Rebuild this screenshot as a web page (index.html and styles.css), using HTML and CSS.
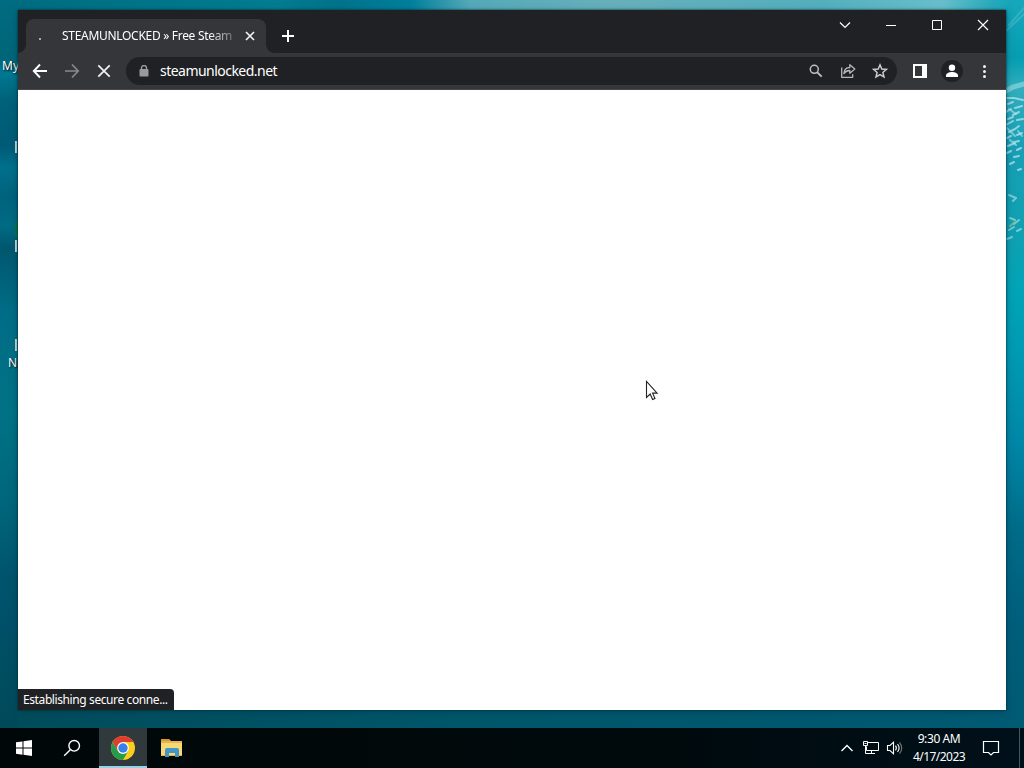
FILE: index.html
```html
<!DOCTYPE html>
<html lang="en">
<head>
<meta charset="utf-8">
<title>Desktop</title>
<link rel="stylesheet" href="styles.css">
</head>
<body>
<main class="desktop">
  <div class="sky"></div>
  <div class="edge-left"></div>
  <div class="edge-right"></div>
  <svg class="foam" width="18" height="260" viewBox="0 0 18 260" fill="none" stroke="#b4e5ec" stroke-linecap="round">
    <path d="M0 31 18 14M3 25 18 8" stroke="#4fc0cf" stroke-width="2" opacity=".5"/>
    <path d="M0 91 7 87 18 84" stroke-width="5" opacity=".5"/>
    <path d="M0 98h8l9 2M2 104l5-2M9 108l7-2M0 112l5-3M7 115l6-3M2 119l5-2M11 120l6-1M0 125l7-4M9 129l4-3M3 132l6-3M11 135l5-2M1 138l4-2M8 142l5-1M2 146l7-3M11 150l4-2M1 153l4-2M8 157l5-1M4 164l4-2M12 170l3-1" stroke-width="2" opacity=".75"/>
    <path d="M3 109l7 5M1 128l8 8M12 131l4 5M4 140l6 5M3 195l7 3M7 201l3-3M4 218l5 2M8 224l5-4M3 230l5-3M11 231l4-2M1 239l5-2" stroke-width="2" opacity=".6"/>
    <path d="M4 226l5-4" stroke="#aac56d" stroke-width="2" opacity=".6"/>
  </svg>
  <span class="label label-my">My</span>
  <span class="label label-n">N</span>
  <i class="shortcut s1"></i><i class="shortcut s2"></i><i class="shortcut s3"></i><i class="green"></i>

  <section class="window">
    <header class="tabstrip">
      <div class="tab">
        <span class="dot"></span>
        <span class="tab-title">STEAMUNLOCKED » Free Steam</span>
        <svg class="tab-close" width="10" height="10" viewBox="0 0 10 10"><path d="M1 1 9 9M9 1 1 9" stroke="#f1f1f2" stroke-width="1.7"/></svg>
      </div>
      <svg class="plus" width="12" height="12" viewBox="0 0 12 12"><path d="M6 0v12M0 6h12" stroke="#fff" stroke-width="2"/></svg>
      <div class="controls">
        <svg width="46" height="30" viewBox="0 0 46 30"><path d="m18 12.500 5 5 5-5" fill="none" stroke="#fff" stroke-width="1.200"/></svg>
        <svg width="46" height="30" viewBox="0 0 46 30"><path d="M18 15.500h10" stroke="#fff"/></svg>
        <svg width="46" height="30" viewBox="0 0 46 30"><path d="M18.500 10.500h9v9h-9z" fill="none" stroke="#fff"/></svg>
        <svg width="46" height="30" viewBox="0 0 46 30"><path d="m18 10 10 10m0-10-10 10" stroke="#fff" stroke-width="1.200"/></svg>
      </div>
    </header>
    <nav class="toolbar">
      <svg width="32" height="32" viewBox="0 0 32 32"><path d="M23 16H10M16 9.500 9.800 16l6.200 6.500" fill="none" stroke="#fff" stroke-width="1.900"/></svg>
      <svg width="32" height="32" viewBox="0 0 32 32"><path d="M9 16h13M16 9.500l6.200 6.500-6.200 6.500" fill="none" stroke="#88898c" stroke-width="1.700"/></svg>
      <svg width="32" height="32" viewBox="0 0 32 32"><path d="m10.300 10.300 11.400 11.400m0-11.400L10.300 21.700" stroke="#eee" stroke-width="1.800"/></svg>
      <div class="omnibox">
        <svg class="lock" width="10" height="12" viewBox="0 0 10 12"><path d="M2.500 5V3a2.500 2.500 0 0 1 5 0v2" fill="none" stroke="#989a9d" stroke-width="1.400"/><rect x=".5" y="4" width="9" height="7.500" rx="1" fill="#989a9d"/></svg>
        <span class="url">steamunlocked.net</span>
        <div class="actions">
          <svg width="32" height="28" viewBox="0 0 32 28" fill="none" stroke="#bfc0c2"><circle cx="14.300" cy="12.300" r="4" stroke-width="1.500"/><path d="m17.300 15.300 4.400 4.400" stroke-width="1.900"/></svg>
          <svg width="32" height="28" viewBox="0 0 32 28" fill="none" stroke="#b6b7ba" stroke-width="1.300"><path d="M9.700 10.500v9.800h11v-3M11.800 16.500c.4-4 2.700-6 6-6V7.700l5 4.300-5 4.300v-2.800c-2.800 0-4.300.8-6 3z" stroke-linejoin="round"/></svg>
          <svg width="32" height="28" viewBox="0 0 32 28"><path d="m16 7.800 1.800 4.200 4.600.4-3.500 3 1.100 4.600-4-2.400-4 2.400 1.100-4.600-3.500-3 4.600-.4z" fill="none" stroke="#c9cacc" stroke-width="1.500"/></svg>
        </div>
      </div>
      <div class="tools">
        <svg width="32" height="32" viewBox="0 0 32 32"><path fill="#fff" fill-rule="evenodd" d="M9 9h14v14H9zM11 11v10h7V11z"/></svg>
        <svg width="32" height="32" viewBox="0 0 32 32"><circle cx="16" cy="16" r="11" fill="#202124"/><circle cx="16" cy="12.700" r="3.200" fill="#fff"/><path d="M10 22v-1.400c0-2.500 3-3.700 6-3.700s6 1.200 6 3.700V22z" fill="#fff"/></svg>
        <svg width="32" height="32" viewBox="0 0 32 32" fill="#f1f1f2"><circle cx="16.500" cy="11.500" r="1.500"/><circle cx="16.500" cy="16.500" r="1.500"/><circle cx="16.500" cy="21.500" r="1.500"/></svg>
      </div>
    </nav>
    <div class="page"></div>
    <div class="status"><span>Establishing secure conne...</span></div>
  </section>
</main>
<footer class="taskbar">
  <div class="apps">
    <div class="app"><svg width="48" height="40" viewBox="0 0 48 40"><path d="m16 14.300 6.500-.9v6.100H16zM23.500 13.200l8.500-1.200v7.500h-8.500zM16 20.500h6.500v6.200l-6.500-.9zM23.500 20.500H32V28l-8.500-1.200z" fill="#fff"/></svg></div>
    <div class="app"><svg width="48" height="40" viewBox="0 0 48 40" fill="none" stroke="#fff" stroke-width="1.400"><circle cx="26.200" cy="17.800" r="5.300"/><path d="m22.300 21.700-6.100 6.100"/></svg></div>
    <div class="app active"><svg width="48" height="40" viewBox="0 0 48 40"><circle cx="24" cy="20" r="12" fill="#fbcd1d"/><path d="M13.600 14a12 12 0 0 1 20.800 0H24l-5.200 9z" fill="#df3d32"/><path d="M13.600 14A12 12 0 0 0 24 32l5.200-9H18.800z" fill="#269b4c"/><circle cx="24" cy="20" r="5.900" fill="#fff"/><circle cx="24" cy="20" r="4.700" fill="#397fe5"/></svg></div>
    <div class="app"><svg width="48" height="40" viewBox="0 0 48 40"><path d="M14 11h8l2 2h11v15H14z" fill="#e8b64b"/><path d="M14 15h21v12H14z" fill="#f8d775"/><path d="M14 11h8l1 2h-9z" fill="#d49a32"/><path d="M18 29v-7q0-2 2-2h10q2 0 2 2v7h-4v-4h-6v4z" fill="#4296c8"/></svg></div>
  </div>
  <div class="tray">
    <svg class="chevron" width="14" height="10" viewBox="0 0 14 10"><path d="m1.500 8 5.500-5.500L12.500 8" fill="none" stroke="#fff" stroke-width="1.400"/></svg>
    <svg class="network" width="18" height="16" viewBox="0 0 18 16" fill="none" stroke="#fff"><path d="M6 2.500h10.500v8H4.500v-4M9.500 10.500v3M5 13.500h8M1.500 1.500h4v4h-4zM3.500 5.500v8h2M2.500 3.500h2"/></svg>
    <svg class="sound" width="18" height="16" viewBox="0 0 18 16" fill="none" stroke="#fff" stroke-width="1.100"><path d="M1.500 5.500H4l3.500-3.300v11.600L4 10.500H1.500zM9.500 5.700q1.700 2.300 0 4.600M11.500 4q3.200 4 0 8"/><path d="M13.500 2.300q4.500 5.700 0 11.400" stroke="#777"/></svg>
    <div class="clock"><span class="time">9:30 AM</span><span class="date">4/17/2023</span></div>
    <svg class="notice" width="18" height="18" viewBox="0 0 18 18"><path d="M1.500 2.500h15v11h-5L9 16l-2.500-2.500h-5z" fill="none" stroke="#fff" stroke-width="1.200"/></svg>
    <i class="show-desktop"></i>
  </div>
</footer>
<svg class="pointer" width="14" height="22" viewBox="0 0 14 22"><path d="M1.500 1.500v16l3.700-3.500 2.400 5.500 2.400-1-2.400-5.400h4.500z" fill="#fff" stroke="#222" stroke-width="1.100"/></svg>
</body>
</html>
```

FILE: styles.css
```css
* { box-sizing: border-box; }
body { margin: 0; width: 1024px; height: 768px; overflow: hidden; display: flex; flex-direction: column; font-family: "Noto Sans", "Open Sans", sans-serif; font-size: 12px; color: #fff; }
svg { display: block; flex: none; }
.desktop { position: relative; height: 728px; background: linear-gradient(90deg, #004c5b, #00566a 45%, #005a73); }
.sky { position: absolute; inset: 0 0 auto; height: 14px; background: linear-gradient(90deg, #006b80, #00778b 18%, #047c91 27%, #00738a 33%, #007f9b 40%, #55aab8 46%, #67b0bb 60%, #54afbd 80%, #68bfcb 92%, #27a9bb 97%, #08a6b9); }
.edge-left { position: absolute; left: 0; top: 0; width: 18px; height: 728px; background: linear-gradient(#006c81, #006579 8%, #007891 10%, #006179 14%, #005a76 20%, #00708c 23%, #00627d 27%, #006b84 31%, #00576f 34%, #006d86 43%, #007285 57%, #00657a 70%, #00546d 79%, #00506a 85%, #004d5f 94%, #00495a); }
.edge-right { position: absolute; right: 0; top: 0; width: 18px; height: 728px; background: linear-gradient(#18a7ba, #059db2 8%, #31aebe 12%, #189fb5 20%, #10a0b2 32%, #00a4b6 40%, #0099b4 49%, #0086a7 61%, #006b88 73%, #005e7b 86%, #005a72); }
.foam { position: absolute; right: 0; top: 0; filter: blur(.7px); }
.label { position: absolute; text-shadow: 1px 1px 2px #000; line-height: 16px; }
.label-my { left: 2px; top: 58px; }
.label-n { left: 8px; top: 355px; }
.shortcut { position: absolute; left: 15px; width: 2px; height: 12px; background: #d1dfdf; }
.s1 { top: 141px; }
.s2 { top: 240px; }
.s3 { top: 339px; }
.green { position: absolute; left: 15px; top: 221px; width: 3px; height: 17px; background: #087747; border-radius: 3px 0 0 3px; }
.window { position: absolute; left: 18px; top: 10px; width: 988px; height: 700px; display: flex; flex-direction: column; background: #fff; box-shadow: 0 0 2px #00232d, 0 2px 7px #003d4c80; }
.tabstrip { height: 43px; display: flex; align-items: flex-start; background: #202124; padding-left: 8px; }
.tab { position: relative; width: 240px; height: 34px; margin-top: 9px; display: flex; align-items: center; background: #35363a; border-radius: 8px 8px 0 0; padding-left: 13px; }
.tab::before, .tab::after { content: ""; position: absolute; bottom: 0; width: 8px; height: 8px; }
.tab::before { left: -8px; background: radial-gradient(circle at 0 0, transparent 7.5px, #35363a 8px); }
.tab::after { right: -8px; background: radial-gradient(circle at 100% 0, transparent 7.5px, #35363a 8px); }
.dot { width: 2px; height: 2px; background: #a9aaac; margin: 5px 21px 0 0; }
.tab-title { width: 174px; margin-bottom: 2px; white-space: nowrap; letter-spacing: -.3px; -webkit-mask-image: linear-gradient(90deg, #000 146px, transparent 180px); mask-image: linear-gradient(90deg, #000 146px, transparent 180px); }
.tab-close { margin-left: 9px; }
.plus { margin: 20px 0 0 16px; }
.controls { display: flex; margin-left: auto; }
.toolbar { height: 37px; padding: 0 6px; display: flex; align-items: center; background: #35363a; border-bottom: 1px solid #46474a; }
.omnibox { width: 771px; height: 28px; margin-left: 6px; padding-left: 13px; display: flex; align-items: center; border-radius: 14px; background: #202124; }
.url { margin-left: 11px; margin-bottom: 1px; font-size: 14px; letter-spacing: -.53px; }
.actions { display: flex; margin-left: auto; margin-right: 1px; }
.tools { display: flex; margin-left: 7px; }
.page { flex: 1; }
.status { position: absolute; left: 0; bottom: 0; width: 156px; height: 21px; padding: 3px 5px 2px; line-height: 16px; background: #202124; border-radius: 0 4px 0 0; white-space: nowrap; letter-spacing: -.4px; }
.taskbar { height: 40px; display: flex; background: linear-gradient(90deg, #000709, #00090b 60%, #00101a); }
.apps { display: flex; margin-right: auto; }
.app { width: 48px; height: 40px; }
.app:nth-child(3) { margin-left: 3px; }
.active { background: #30393b; border-bottom: 2px solid #91d4e8; }
.tray { display: flex; align-items: center; }
.chevron { margin-right: 8px; }
.sound { margin-left: 6px; }
.clock { display: flex; flex-direction: column; align-items: center; width: 66px; margin-left: 2px; line-height: 18px; }
.time { letter-spacing: -.4px; }
.date { letter-spacing: -.55px; }
.notice { margin-left: 10px; }
.show-desktop { width: 5px; height: 40px; margin-left: 19px; border-left: 1px solid #48545c; }
.pointer { position: absolute; left: 645px; top: 380px; }
```
